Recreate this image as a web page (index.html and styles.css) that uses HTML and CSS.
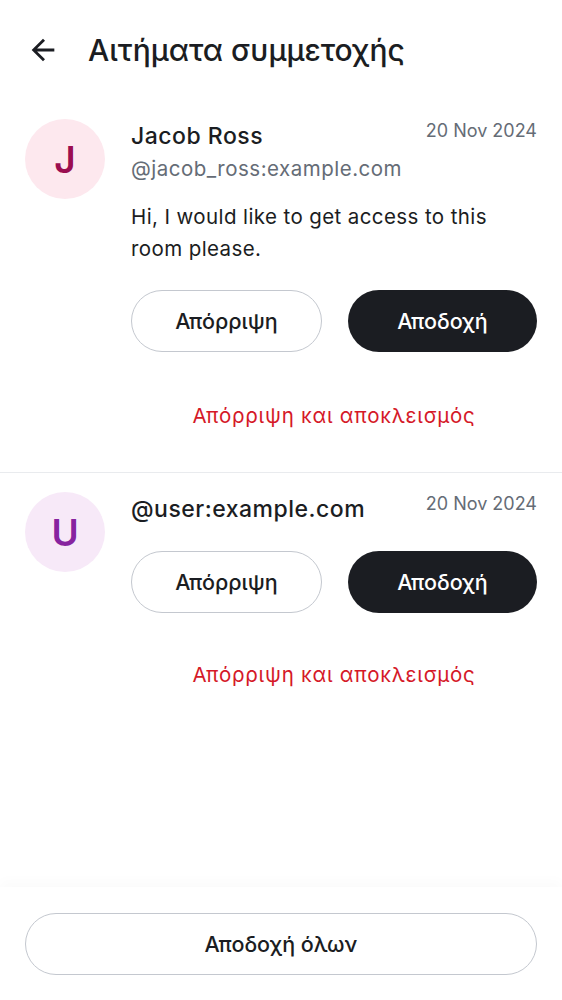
FILE: index.html
```html
<!DOCTYPE html>
<html lang="el">
<head>
    <meta charset="UTF-8">
    <meta name="viewport" content="width=device-width, initial-scale=1.0">
    <title>Αιτήματα συμμετοχής</title>
    <link rel="stylesheet" href="styles.css">
</head>
<body>
    <div id="page">
        <div class="topbar">
            <button class="back" aria-label="Πίσω">
                <svg width="34" height="34" viewBox="0 0 24 24"><path d="M20 11H7.83l5.59-5.59L12 4l-8 8 8 8 1.41-1.41L7.83 13H20v-2z" fill="#1b1d22"/></svg>
            </button>
            <h1>Αιτήματα συμμετοχής</h1>
        </div>

        <div class="request">
            <div class="avatar pink">J</div>
            <div class="body">
                <div class="head">
                    <div class="name">Jacob Ross</div>
                    <div class="date">20 Nov 2024</div>
                </div>
                <div class="handle">@jacob_ross:example.com</div>
                <p class="msg">Hi, I would like to get access to this room please.</p>
                <div class="actions">
                    <button class="btn outline">Απόρριψη</button>
                    <button class="btn filled">Αποδοχή</button>
                </div>
                <button class="ban">Απόρριψη και αποκλεισμός</button>
            </div>
        </div>

        <div class="request second">
            <div class="avatar violet">U</div>
            <div class="body">
                <div class="head">
                    <div class="name">@user:example.com</div>
                    <div class="date">20 Nov 2024</div>
                </div>
                <div class="actions">
                    <button class="btn outline">Απόρριψη</button>
                    <button class="btn filled">Αποδοχή</button>
                </div>
                <button class="ban">Απόρριψη και αποκλεισμός</button>
            </div>
        </div>

        <div class="footer">
            <button class="btn outline wide">Αποδοχή όλων</button>
        </div>
    </div>
</body>
</html>
```

FILE: styles.css
```css
*{
    margin: 0;
    padding: 0;
    box-sizing: border-box;
}
body{
    background: #fff;
    font-family: Inter, "Noto Sans", sans-serif;
    color: #1b1d22;
}
#page{
    width: 562px;
    height: 1000px;
    display: flex;
    flex-direction: column;
}
button{
    border: none;
    background: none;
    font: inherit;
    color: inherit;
    cursor: pointer;
}
.topbar{
    height: 100px;
    display: flex;
    align-items: center;
    padding: 0 0 0 26px;
}
.back{
    width: 34px;
    height: 34px;
    display: flex;
    margin-right: 28px;
}
.topbar h1{
    font-weight: 500;
    font-size: 30px;
}
.request{
    display: flex;
    padding: 19px 25px 0 25px;
    border-bottom: 1px solid #e9ebee;
}
.request.second{
    border-bottom: none;
}
.avatar{
    width: 80px;
    height: 80px;
    border-radius: 50%;
    flex: none;
    display: flex;
    align-items: center;
    justify-content: center;
    font-weight: 600;
    font-size: 37px;
    margin-right: 26px;
}
.avatar.pink{
    background: #fde8ee;
    color: #9b0e50;
}
.avatar.violet{
    background: #f7e9f8;
    color: #87239f;
}
.body{
    flex: 1;
    display: flex;
    flex-direction: column;
}
.head{
    display: flex;
    justify-content: space-between;
    align-items: flex-start;
}
.name{
    font-weight: 500;
    font-size: 23px;
    letter-spacing: 0.5px;
    line-height: 32px;
    margin-top: 1px;
}
.date{
    font-size: 18px;
    color: #656c76;
    line-height: 24px;
}
.handle{
    font-size: 20.5px;
    letter-spacing: 0.5px;
    color: #656c76;
    line-height: 30px;
    margin-top: 2px;
}
.msg{
    font-size: 20.5px;
    letter-spacing: 0.4px;
    line-height: 32px;
    margin-top: 17px;
}
.actions{
    display: flex;
    gap: 26px;
    margin-top: 25px;
}
.second .actions{
    margin-top: 26px;
}
.btn{
    flex: 1;
    height: 62px;
    border-radius: 31px;
    font-weight: 500;
    font-size: 21.5px;
}
.btn.outline{
    border: 1.5px solid #c4c8cf;
    color: #1b1d22;
    background: #fff;
}
.btn.filled{
    background: #1b1d22;
    color: #fff;
}
.ban{
    align-self: center;
    color: #d51928;
    font-size: 20.5px;
    letter-spacing: 0.75px;
    padding: 0;
    margin: 50px 0 42px;
    line-height: 28px;
}
.second .ban{
    margin-top: 48px;
}
.footer{
    margin-top: auto;
    padding: 26px 25px 25px;
    background: #fff;
    box-shadow: 0 -6px 12px rgba(0,0,0,0.02);
    display: flex;
}
.footer .wide{
    flex: 1;
}
```
